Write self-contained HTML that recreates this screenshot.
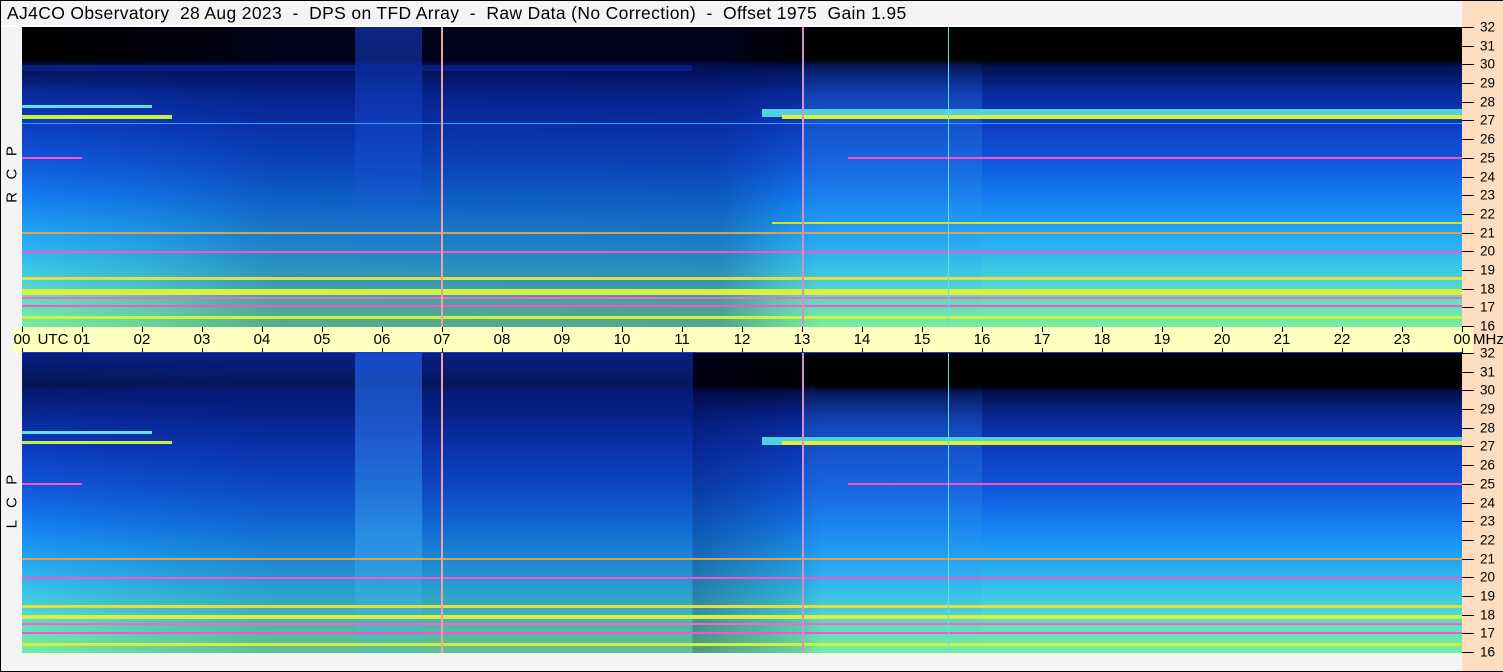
<!DOCTYPE html>
<html><head><meta charset="utf-8"><style>
*{margin:0;padding:0;box-sizing:border-box}
body{width:1503px;height:672px;background:#f4f4f6;position:relative;overflow:hidden;font-family:"Liberation Sans",sans-serif;border:1px solid #000}
.t{position:absolute;left:6px;top:2px;font-size:17.5px;color:#000;white-space:pre;letter-spacing:0.35px}
.plot{position:absolute;left:21px;width:1440px;height:300px;overflow:hidden;
background:
linear-gradient(to right,rgba(0,0,0,0) 0px,rgba(0,10,90,0.1) 120px,rgba(0,10,90,0.28) 250px,rgba(0,10,90,0.3) 700px,rgba(0,10,90,0.1) 760px,rgba(0,0,0,0) 800px,rgba(0,0,0,0) 1440px),
linear-gradient(to bottom,#000 0%,#000 11%,#031050 13%,#082a9a 22%,#0c3cc0 32%,#0f58dc 45%,#147ef0 57%,#20a4f4 68%,#38c6e8 80%,#60e0c0 90%,#78ecA0 100%)}
.band{position:absolute;top:0;height:300px}
.hl{position:absolute;height:2px}
.vl{position:absolute;top:0;width:2px;height:300px}
.axis{position:absolute;left:12px;top:326px;width:1460px;height:26px;background:#ffffc0}
.axis span{position:absolute;top:4px;font-size:15px;transform:translateX(-50%)}
.tk{position:absolute;width:1px;height:5px;background:#000}
.rp{position:absolute;left:1461px;top:0;width:41px;height:670px;background:#fddcbf}
.rp span{position:absolute;left:18px;font-size:13.5px;transform:translateY(-50%)}
.rp i{position:absolute;left:0;width:12px;height:1px;background:#000}
.lab{position:absolute;left:2px;font-size:15px;transform:rotate(-90deg);transform-origin:center;white-space:pre;width:100px;text-align:center}
</style></head><body>
<div class="t">AJ4CO Observatory  28 Aug 2023  -  DPS on TFD Array  -  Raw Data (No Correction)  -  Offset 1975  Gain 1.95</div>
<div style="position:absolute;left:0;top:24px;width:1461px;height:2px;background:#fff"></div>

<div class="rp" id="rp"></div>

<div class="lab" style="left:-39px;top:165px">R   C   P</div>
<div class="lab" style="left:-39px;top:492px">L   C   P</div>

<div class="plot" style="top:26px">
 <div class="band" style="left:333px;width:67px;background:linear-gradient(to bottom,rgba(20,60,200,0.6),rgba(30,90,230,0.3) 40%,rgba(0,0,0,0) 80%)"></div>
 <div class="band" style="left:780px;width:180px;background:linear-gradient(to bottom,rgba(0,0,0,0) 10%,rgba(40,120,230,0.35) 25%,rgba(50,150,240,0.25) 60%,rgba(0,0,0,0))"></div>
 <div class="hl" style="left:0;width:670px;top:38px;height:6px;background:rgba(10,40,160,0.6)"></div>
 <div class="hl" style="left:0;width:130px;top:78px;height:3px;background:#60e0e0"></div>
 <div class="hl" style="left:0;width:150px;top:88px;height:4px;background:#c8f040"></div>
 <div class="hl" style="left:0;width:1440px;top:96px;height:1px;background:#30a0ff"></div>
 <div class="hl" style="left:740px;width:700px;top:82px;height:8px;background:#50d0e0"></div>
 <div class="hl" style="left:760px;width:680px;top:88px;height:4px;background:#e0f030"></div>
 <div class="hl" style="left:0;width:60px;top:130px;background:#ff50d0"></div>
 <div class="hl" style="left:826px;width:614px;top:130px;background:#ff50c0"></div>
 <div class="hl" style="left:0;width:1440px;top:205px;height:2px;background:#e0a050"></div>
 <div class="hl" style="left:0;width:1440px;top:224px;height:2px;background:#ff50d0"></div>
 <div class="hl" style="left:750px;width:690px;top:195px;height:2px;background:#d0e040"></div>
 <div class="hl" style="left:0;width:1440px;top:250px;height:3px;background:#e0e040"></div>
 <div class="hl" style="left:0;width:1440px;top:262px;height:6px;background:#d8f040"></div>
 <div class="hl" style="left:0;width:1440px;top:270px;height:2px;background:#ff60d0"></div>
 <div class="hl" style="left:0;width:1440px;top:278px;height:2px;background:#ff50d0"></div>
 <div class="hl" style="left:0;width:1440px;top:289px;height:3px;background:#d0f040"></div>
 <div class="vl" style="left:419px;background:#f0a0a0"></div>
 <div class="vl" style="left:780px;background:#d090d0"></div>
 <div class="vl" style="left:926px;width:1px;background:#60e0e0"></div>
</div>

<div class="plot" style="top:352px;background:
linear-gradient(to right,rgba(0,0,0,0) 0px,rgba(0,10,90,0.1) 120px,rgba(0,10,90,0.2) 250px,rgba(0,10,90,0.2) 670px,rgba(0,0,60,0.35) 671px,rgba(0,0,60,0.1) 780px,rgba(0,0,0,0) 800px),
linear-gradient(to bottom,#000 0%,#000 11%,#031050 13%,#082a9a 22%,#0c3cc0 32%,#0f58dc 45%,#147ef0 57%,#20a4f4 68%,#38c6e8 80%,#60e0c0 90%,#78ecA0 100%)">
 <div class="band" style="left:0;width:671px;top:0;height:60px;background:linear-gradient(to bottom,rgba(10,40,160,0.8),rgba(10,40,160,0.3))"></div>
 <div class="band" style="left:333px;width:67px;background:linear-gradient(to bottom,rgba(30,90,230,0.7),rgba(60,170,240,0.5) 60%,rgba(80,200,230,0.2))"></div>
 <div class="band" style="left:780px;width:180px;background:linear-gradient(to bottom,rgba(0,0,0,0) 10%,rgba(40,120,230,0.35) 25%,rgba(50,150,240,0.25) 60%,rgba(0,0,0,0))"></div>
 <div class="hl" style="left:0;width:130px;top:78px;height:3px;background:#60e0e0"></div>
 <div class="hl" style="left:0;width:150px;top:88px;height:3px;background:#c8f040"></div>
 <div class="hl" style="left:740px;width:700px;top:84px;height:8px;background:#50d0e0"></div>
 <div class="hl" style="left:760px;width:680px;top:88px;height:4px;background:#e0f030"></div>
 <div class="hl" style="left:0;width:60px;top:130px;background:#ff50d0"></div>
 <div class="hl" style="left:826px;width:614px;top:130px;background:#ff50c0"></div>
 <div class="hl" style="left:0;width:1440px;top:205px;height:2px;background:#e0a050"></div>
 <div class="hl" style="left:0;width:1440px;top:224px;height:2px;background:#ff50d0"></div>
 <div class="hl" style="left:0;width:1440px;top:252px;height:3px;background:#e0e040"></div>
 <div class="hl" style="left:0;width:1440px;top:262px;height:4px;background:#d8f040"></div>
 <div class="hl" style="left:0;width:1440px;top:270px;height:2px;background:#ff60d0"></div>
 <div class="hl" style="left:0;width:1440px;top:279px;height:2px;background:#ff50d0"></div>
 <div class="hl" style="left:0;width:1440px;top:290px;height:3px;background:#d0f040"></div>
 <div class="vl" style="left:419px;background:#f0a0a0"></div>
 <div class="vl" style="left:780px;background:#d090d0"></div>
 <div class="vl" style="left:926px;width:1px;background:#60e0e0"></div>
</div>

<div class="axis" id="ax"></div>
<div style="position:absolute;left:21px;top:351px;width:1440px;height:1px;background:#1040e0"></div>

<script>
var ax=document.getElementById('ax'),h='';
for(var i=0;i<=24;i++){var x=9+i*60;var l=(i%24<10?'0':'')+(i%24);
h+='<div class="tk" style="left:'+x+'px;top:0"></div><div class="tk" style="left:'+x+'px;top:21px"></div>';
h+='<span style="left:'+x+'px">'+l+'</span>';}
h+='<span style="left:40px">UTC</span><span style="left:1460px;transform:none">MHz</span>';
ax.innerHTML=h;
var rp=document.getElementById('rp'),r='';
[[26,325],[352,651]].forEach(function(p){for(var f=16;f<=32;f++){var y=p[1]-(f-16)*(p[1]-p[0])/16;
r+='<i style="top:'+Math.round(y)+'px"></i><span style="top:'+Math.round(y)+'px">'+f+'</span>';}});
rp.innerHTML=r;
</script>
</body></html>
